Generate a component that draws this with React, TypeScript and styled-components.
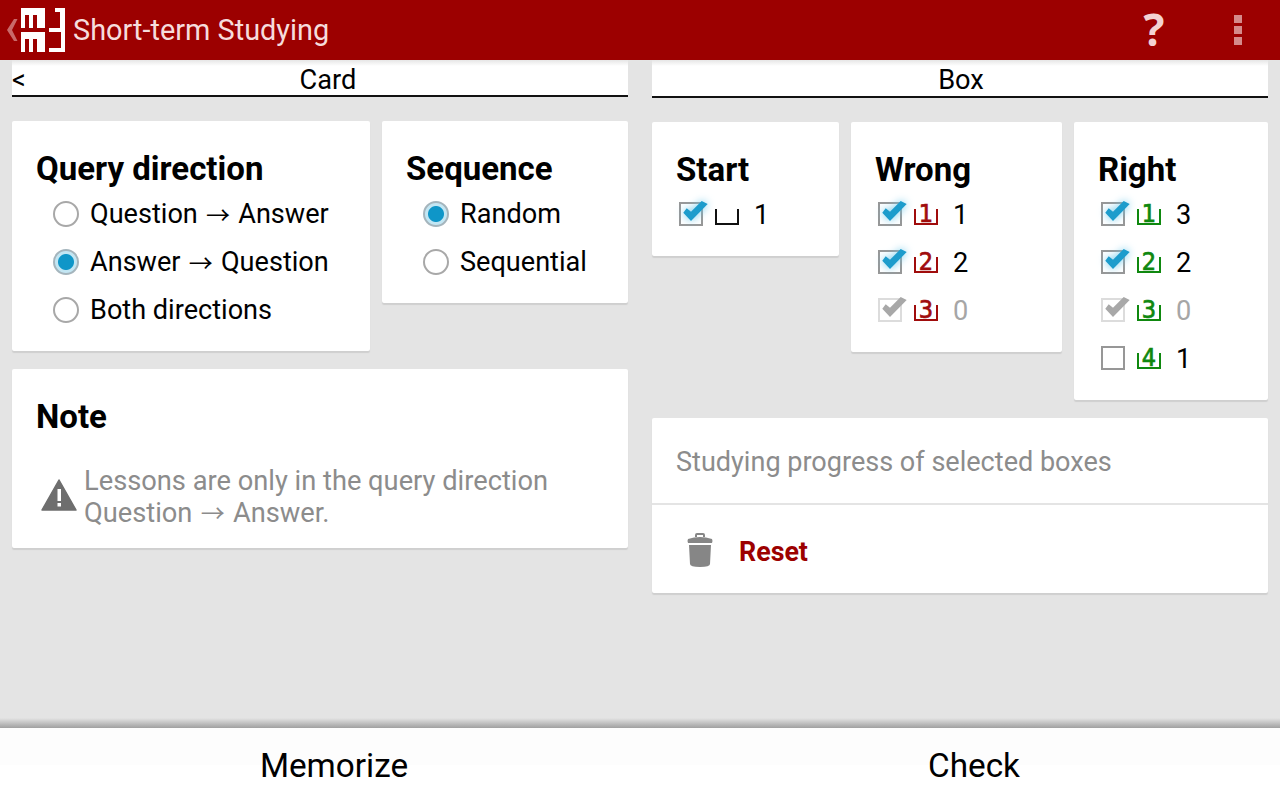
import styled, { createGlobalStyle } from 'styled-components'

const GlobalStyle = createGlobalStyle`
    html, body {
        margin: 0;
        padding: 0;
        height: 100%;
        overflow: hidden;
    }
    body {
        background: #e4e4e4;
        font-family: Roboto, 'Liberation Sans', sans-serif;
        color: #000;
    }
`

const Screen = styled.div`
    width: 1280px;
    height: 800px;
    display: flex;
    flex-direction: column;
    background: #e4e4e4;
`

const ActionBar = styled.header`
    height: 60px;
    flex: none;
    background: #9c0000;
    display: flex;
    align-items: center;
    color: #f6dcdc;
`

const BackChevron = styled.svg`
    width: 12px;
    height: 24px;
    margin-left: 6px;
    margin-right: 3px;
`

const Title = styled.h1`
    margin: 0 0 0 8px;
    font-size: 28.9px;
    font-weight: 400;
    flex: 1;
`

const HelpMark = styled.span`
    font-size: 44px;
    font-weight: 700;
    width: 24px;
    text-align: center;
    font-family: 'Open Sans', sans-serif;
    color: #f3d2d2;
    margin-top: -2px;
`

const OverflowDots = styled.div`
    width: 8px;
    margin: 0 38px 0 68px;
    display: grid;
    grid-row-gap: 3px;
    span {
        height: 8px;
        background: #d58a8a;
    }
`

const Columns = styled.main`
    flex: 1;
    display: grid;
    grid-template-columns: 616px 616px;
    grid-column-gap: 24px;
    padding: 0 12px;
    align-items: start;
`

const Column = styled.section`
    display: flex;
    flex-direction: column;
`

const TabHeader = styled.div<{ $height: number; $gap: number }>`
    display: flex;
    height: ${(props) => props.$height}px;
    margin-bottom: ${(props) => props.$gap}px;
    box-sizing: border-box;
    background: #fff;
    background-image: linear-gradient(#e6e6e6, #fff 6px);
    border-bottom: 2px solid #111;
    font-size: 27.2px;
    line-height: 41px;
`

const TabBack = styled.span`
    flex: none;
`

const TabName = styled.span`
    flex: 1;
    text-align: center;
    padding-left: 2px;
`

const CardRow = styled.div`
    display: flex;
    align-items: flex-start;
    justify-content: space-between;
`

const Card = styled.div<{ $width?: number; $height: number }>`
    width: ${(props) => (props.$width ? `${props.$width}px` : 'auto')};
    height: ${(props) => props.$height}px;
    box-sizing: border-box;
    background: #fff;
    border-radius: 2px;
    box-shadow: 0 2px 1px #cfcfcf;
    padding: 25px 24px 0;
`

const NoteCard = styled(Card)`
    margin-top: 18px;
`

const CardTitle = styled.h2`
    margin: 2px 0 0;
    font-size: 33px;
    line-height: 42px;
    font-weight: 700;
`

const RadioRow = styled.div`
    display: flex;
    align-items: center;
    height: 48px;
    font-size: 27.1px;
    margin-left: 17px;
    white-space: pre;
`

const RadioCircle = styled.span<{ $checked?: boolean }>`
    width: 26px;
    height: 26px;
    flex: none;
    box-sizing: border-box;
    border-radius: 50%;
    border: 2px solid ${(props) => (props.$checked ? '#a5b5bd' : '#a8a8a8')};
    background: ${(props) =>
        props.$checked
            ? 'radial-gradient(circle, #0f96c8 0 7.5px, #c3e6f3 8.5px 11px)'
            : '#fff'};
    margin-right: 11px;
`

const Arrow = styled.span`
    display: inline-block;
    height: 24px;
    margin: 0 1.5px;
    font-family: 'Noto Sans CJK SC', 'DejaVu Sans', sans-serif;
    font-size: 24px;
    line-height: 24px;
`

const NoteBody = styled.div`
    display: flex;
    align-items: center;
    margin: 27px 0 0 5px;
    color: #8c8c8c;
    font-size: 27.25px;
    line-height: 32px;
    svg {
        width: 36px;
        height: 32px;
        flex: none;
        margin: -4px 7px 0 0;
    }
`

const BoxRow = styled.div`
    display: flex;
    align-items: center;
    height: 48px;
    margin-left: 3px;
`

const CheckBox = styled.span<{ $dim?: boolean }>`
    position: relative;
    width: 24px;
    height: 24px;
    margin-bottom: 2px;
    flex: none;
    box-sizing: border-box;
    border: 2px solid ${(props) => (props.$dim ? '#dcdcdc' : '#979797')};
    svg {
        position: absolute;
        left: -2px;
        top: -6px;
        width: 32px;
        height: 28px;
        overflow: visible;
    }
`

const BoxGlyph = styled.span<{ $color: string }>`
    position: relative;
    width: 24px;
    height: 24px;
    margin: 0 0 2px 12px;
    flex: none;
    color: ${(props) => props.$color};
    font-family: 'DejaVu Sans Condensed', 'DejaVu Sans', sans-serif;
    font-stretch: condensed;
    font-size: 25px;
    line-height: 23px;
    text-align: center;
    -webkit-text-stroke: 0.7px ${(props) => props.$color};
    &::after {
        content: '';
        position: absolute;
        left: 0;
        right: 0;
        bottom: 1px;
        height: 16px;
        box-sizing: border-box;
        border: solid ${(props) => props.$color};
        border-width: 0 2px 2px;
    }
`

const Count = styled.span<{ $dim?: boolean }>`
    margin-left: 15px;
    font-size: 27.2px;
    color: ${(props) => (props.$dim ? '#a6a6a6' : '#000')};
`

const RightStack = styled.div`
    margin-top: 18px;
    height: 175px;
    background: #fff;
    border-radius: 2px;
    box-shadow: 0 2px 1px #cfcfcf;
    display: flex;
    flex-direction: column;
`

const ProgressLabel = styled.div`
    padding: 2px 0 0 24px;
    height: 83px;
    display: flex;
    align-items: center;
    font-size: 27.05px;
    color: #8c8c8c;
    border-bottom: 2px solid #e4e4e4;
`

const ResetRow = styled.div`
    flex: 1;
    display: flex;
    align-items: center;
    padding: 2px 0 0 34px;
    svg {
        width: 28px;
        height: 36px;
    }
`

const ResetLabel = styled.span`
    margin: 4px 0 0 25px;
    font-size: 26.8px;
    font-weight: 700;
    color: #9c0000;
`

const BottomBar = styled.footer`
    flex: none;
    height: 82px;
    display: grid;
    grid-template-columns: 1fr 1fr;
    background: linear-gradient(
        #e4e4e4 0,
        #a0a0a0 10px,
        #fdfdfd 10px,
        #fdfdfd 47px,
        #fff 47px
    );
`

const BottomButton = styled.div`
    padding: 12px 0 0 28px;
    display: flex;
    align-items: center;
    justify-content: center;
    font-size: 33.3px;
`

const CheckSvg = styled.svg<{ $glow: boolean }>`
    filter: ${(props) =>
        props.$glow ? 'drop-shadow(0 0 4px #6cc8ea)' : 'none'};
`

const CHECK_BLUE = '#1c9ccc'
const CHECK_GREY = '#a8a8a8'
const WRONG_RED = '#a00c0c'
const RIGHT_GREEN = '#0f880f'

function CheckMark({ dim }: { dim?: boolean }) {
    return (
        <CheckSvg viewBox="0 -4 32 28" $glow={!dim}>
            <path
                d="M4.3 10.7 L7.7 6.3 L12 9.7 L22.7 -1 L28.7 2 L12 19 Z"
                fill={dim ? CHECK_GREY : CHECK_BLUE}
            />
        </CheckSvg>
    )
}

function Logo() {
    return (
        <svg width="44" height="44" viewBox="0 0 44 44" fill="#fff">
            <path d="M0 0H24V20H16V7H12V20H8V7H4V20H0Z" />
            <path d="M0 24H24V44H16V31H12V44H8V31H4V44H0Z" />
            <path d="M34 0H44V44H28V40H40V24H28V20H39V4H34Z" />
        </svg>
    )
}

function BoxEntry({
    checked,
    dim,
    label,
    color,
    count,
}: {
    checked?: boolean
    dim?: boolean
    label: string
    color: string
    count: number
}) {
    return (
        <BoxRow>
            <CheckBox $dim={dim}>{checked && <CheckMark dim={dim} />}</CheckBox>
            <BoxGlyph $color={color}>{label}</BoxGlyph>
            <Count $dim={dim}>{count}</Count>
        </BoxRow>
    )
}

export default function App() {
    return (
        <Screen>
            <GlobalStyle />
            <ActionBar>
                <BackChevron viewBox="0 0 12 24">
                    <path d="M8 1 H11.5 L6 12 L11.5 23 H8 L1 12 Z" fill="#c96a6a" />
                </BackChevron>
                <Logo />
                <Title>Short-term Studying</Title>
                <HelpMark>?</HelpMark>
                <OverflowDots>
                    <span />
                    <span />
                    <span />
                </OverflowDots>
            </ActionBar>
            <Columns>
                <Column>
                    <TabHeader $height={37} $gap={24}>
                        <TabBack>&lt;</TabBack>
                        <TabName>Card</TabName>
                    </TabHeader>
                    <CardRow>
                        <Card $width={358} $height={230}>
                            <CardTitle>Query direction</CardTitle>
                            <RadioRow>
                                <RadioCircle />
                                Question <Arrow>→</Arrow> Answer
                            </RadioRow>
                            <RadioRow>
                                <RadioCircle $checked />
                                Answer <Arrow>→</Arrow> Question
                            </RadioRow>
                            <RadioRow>
                                <RadioCircle />
                                Both directions
                            </RadioRow>
                        </Card>
                        <Card $width={246} $height={182}>
                            <CardTitle>Sequence</CardTitle>
                            <RadioRow>
                                <RadioCircle $checked />
                                Random
                            </RadioRow>
                            <RadioRow>
                                <RadioCircle />
                                Sequential
                            </RadioRow>
                        </Card>
                    </CardRow>
                    <NoteCard $height={179}>
                        <CardTitle>Note</CardTitle>
                        <NoteBody>
                            <svg viewBox="0 0 36 32">
                                <path
                                    d="M18 1 L35 31 H1 Z"
                                    fill="#6e6e6e"
                                    stroke="#6e6e6e"
                                    strokeWidth="1.5"
                                    strokeLinejoin="round"
                                />
                                <rect x="16.5" y="10" width="3.5" height="12" fill="#fff" />
                                <rect x="16.5" y="24" width="3.5" height="3.5" fill="#fff" />
                            </svg>
                            <div>
                                Lessons are only in the query direction
                                <br />
                                Question <Arrow>→</Arrow> Answer.
                            </div>
                        </NoteBody>
                    </NoteCard>
                </Column>
                <Column>
                    <TabHeader $height={38} $gap={24}>
                        <TabName>Box</TabName>
                    </TabHeader>
                    <CardRow>
                        <Card $width={187} $height={134}>
                            <CardTitle>Start</CardTitle>
                            <BoxEntry checked label="" color="#111" count={1} />
                        </Card>
                        <Card $width={211} $height={230}>
                            <CardTitle>Wrong</CardTitle>
                            <BoxEntry checked label="1" color={WRONG_RED} count={1} />
                            <BoxEntry checked label="2" color={WRONG_RED} count={2} />
                            <BoxEntry checked dim label="3" color={WRONG_RED} count={0} />
                        </Card>
                        <Card $width={194} $height={278}>
                            <CardTitle>Right</CardTitle>
                            <BoxEntry checked label="1" color={RIGHT_GREEN} count={3} />
                            <BoxEntry checked label="2" color={RIGHT_GREEN} count={2} />
                            <BoxEntry checked dim label="3" color={RIGHT_GREEN} count={0} />
                            <BoxEntry label="4" color={RIGHT_GREEN} count={1} />
                        </Card>
                    </CardRow>
                    <RightStack>
                        <ProgressLabel>Studying progress of selected boxes</ProgressLabel>
                        <ResetRow>
                            <svg viewBox="0 0 28 36">
                                <path d="M9 3 Q9 1 11 1 H17 Q19 1 19 3 V5 H17 V3 H11 V5 H9 Z" fill="#868686" />
                                <path d="M2 7 Q14 3 26 7 Q27 9 26 11 H2 Q1 9 2 7 Z" fill="#868686" />
                                <path d="M3 13 H25 L24 32 Q24 35 14 35 Q4 35 4 32 Z" fill="#868686" />
                            </svg>
                            <ResetLabel>Reset</ResetLabel>
                        </ResetRow>
                    </RightStack>
                </Column>
            </Columns>
            <BottomBar>
                <BottomButton>Memorize</BottomButton>
                <BottomButton>Check</BottomButton>
            </BottomBar>
        </Screen>
    )
}
